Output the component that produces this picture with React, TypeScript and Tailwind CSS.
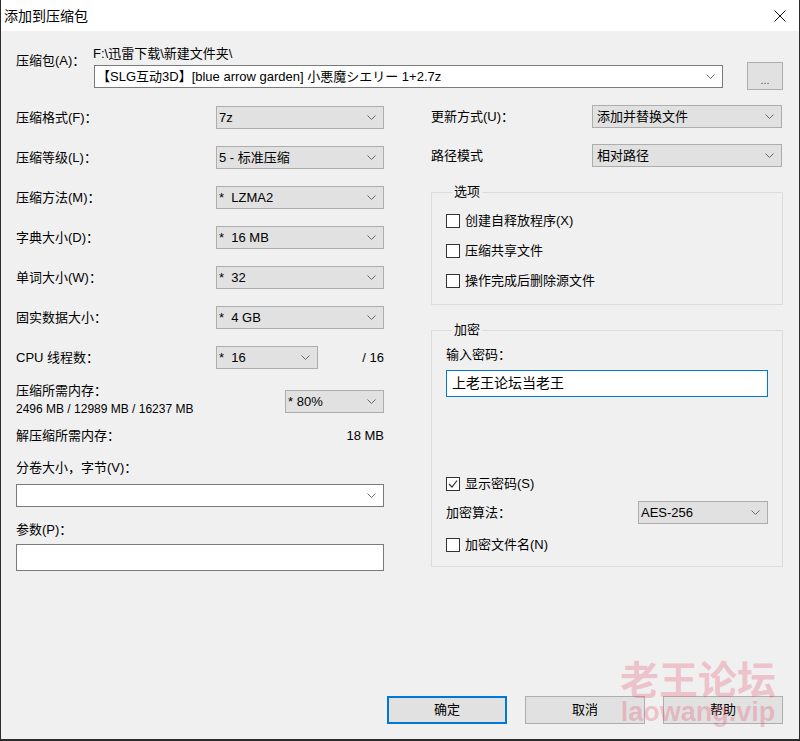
import React from 'react';
import clsx from 'clsx';

// small down-arrow used in every combo box
const Chevron = () => (
  <svg width="9" height="5" viewBox="0 0 9 5" className="shrink-0">
    <polyline points="0.5,0.5 4.5,4.5 8.5,0.5" fill="none" stroke="#6a6a6a" strokeWidth="1" />
  </svg>
);

type ComboProps = { text?: string; className?: string; white?: boolean };

const Combo: React.FC<ComboProps> = ({ text = '', className, white }) => (
  <div
    className={clsx(
      'flex items-center border pl-[2px] pr-[7px] leading-[18px] h-[23px]',
      white ? 'bg-white border-[#7a7a7a]' : 'bg-[#e1e1e1] border-[#adadad]',
      className,
    )}
  >
    <span className="flex-1 truncate whitespace-pre">{text}</span>
    <Chevron />
  </div>
);

const Check: React.FC<{ label: string; checked?: boolean }> = ({ label, checked }) => (
  <div className="flex items-center h-[18px]">
    <span className="w-[14px] h-[14px] border border-[#333333] bg-white flex items-center justify-center">
      {checked && (
        <svg width="10" height="10" viewBox="0 0 10 10">
          <polyline points="1,5 4,8 9,1.5" fill="none" stroke="#333333" strokeWidth="1.2" />
        </svg>
      )}
    </span>
    <span className="ml-[5px]">{label}</span>
  </div>
);

//left column rows with a label and a combo
const leftRows = [
  { label: '压缩格式(F)：', value: '7z' },
  { label: '压缩等级(L)：', value: '5 - 标准压缩' },
  { label: '压缩方法(M)：', value: '*  LZMA2' },
  { label: '字典大小(D)：', value: '*  16 MB' },
  { label: '单词大小(W)：', value: '*  32' },
  { label: '固实数据大小：', value: '*  4 GB' },
];

const Btn: React.FC<{ label: string; primary?: boolean }> = ({ label, primary }) => (
  <button
    className={clsx(
      'w-[120px] h-[28px] bg-[#e1e1e1] flex items-center justify-center',
      primary ? 'border-2 border-[#0078d7]' : 'border border-[#adadad]',
    )}
  >
    {label}
  </button>
);

export default function App() {
  return (
    <div className="w-[800px] h-[741px] flex flex-col bg-[#f0f0f0] border-l border-r border-b-2 border-[#2b2b2b] text-[13px] text-black font-[Liberation_Sans,Noto_Sans_CJK_SC,Noto_Sans_CJK_JP,sans-serif]">
      {/* title bar */}
      <div className="h-[31px] bg-white flex items-center justify-between pl-[3px] pr-[13px] shrink-0">
        <span className="text-[14px] leading-[20px]">添加到压缩包</span>
        <svg width="12" height="12" viewBox="0 0 12 12">
          <path d="M0.5 0.5 L11.5 11.5 M11.5 0.5 L0.5 11.5" stroke="#111" strokeWidth="1" />
        </svg>
      </div>

      <div className="relative flex-1 flex flex-col">
        {/* archive name */}
        <div className="flex mt-[13px] ml-[15px]">
          <div className="w-[78px] pt-[9px] leading-[16px]">压缩包(A)：</div>
          <div className="w-[629px]">
            <div className="h-[19px] leading-[19px] -ml-[1px]">F:\迅雷下载\新建文件夹\</div>
            <Combo white className="mt-[2px] pl-[2px]" text="【SLG互动3D】[blue arrow garden] 小悪魔シエリー 1+2.7z" />
          </div>
          <button className="ml-[24px] mt-[18px] w-[36px] h-[28px] bg-[#e1e1e1] border border-[#adadad] flex items-end justify-center pb-[3px] text-[11px] leading-[12px] text-[#555]">
            ...
          </button>
        </div>

        <div className="flex ml-[15px]">
          {/* left column */}
          <div className="w-[368px] flex flex-col">
            <div className="flex flex-col gap-[17px] mt-[16px]">
              {leftRows.map((r) => (
                <div key={r.label} className="flex items-center justify-between h-[23px]">
                  <span>{r.label}</span>
                  <Combo text={r.value} className="w-[168px]" />
                </div>
              ))}
              <div className="flex items-center h-[23px]">
                <span className="w-[200px]">CPU 线程数：</span>
                <Combo text="*  16" className="w-[102px]" />
                <span className="flex-1 text-right">/ 16</span>
              </div>
            </div>

            <div className="flex justify-between mt-[12px]">
              <div className="leading-[19px]">
                <div>压缩所需内存：</div>
                <div className="text-[12px]">2496 MB / 12989 MB / 16237 MB</div>
              </div>
              <Combo text="* 80%" className="w-[99px] mt-[9px]" />
            </div>

            <div className="flex justify-between mt-[8px] leading-[18px]">
              <span>解压缩所需内存：</span>
              <span>18 MB</span>
            </div>

            <div className="mt-[14px] leading-[18px]">分卷大小，字节(V)：</div>
            <Combo white className="mt-[7px] h-[22px]" />

            <div className="mt-[14px] leading-[18px]">参数(P)：</div>
            <div className="mt-[5px] h-[27px] bg-white border border-[#7a7a7a]" />
          </div>

          {/* right column */}
          <div className="w-[352px] ml-[47px] flex flex-col">
            <div className="flex items-center h-[23px] mt-[15px]">
              <span className="w-[161px]">更新方式(U)：</span>
              <Combo text="添加并替换文件" className="w-[190px] pl-[4px]" />
            </div>
            <div className="flex items-center h-[23px] mt-[16px]">
              <span className="w-[161px]">路径模式</span>
              <Combo text="相对路径" className="w-[190px] pl-[4px]" />
            </div>

            <fieldset className="mt-[16px] border border-[#dcdcdc] pl-[14px] pt-[11px] pb-[14px] flex flex-col gap-[12px]">
              <legend className="ml-[6px] px-[2px] leading-[18px]">选项</legend>
              <Check label="创建自释放程序(X)" />
              <Check label="压缩共享文件" />
              <Check label="操作完成后删除源文件" />
            </fieldset>

            <fieldset className="mt-[16px] border border-[#dcdcdc] pl-[14px] pt-[7px] pb-[12px]">
              <legend className="ml-[6px] px-[2px] leading-[18px]">加密</legend>
              <div className="leading-[18px]">输入密码：</div>
              <div className="mt-[6px] w-[322px] h-[27px] bg-white border border-[#0078d7] flex items-center pl-[5px] text-[14px]">
                上老王论坛当老王
              </div>
              <div className="mt-[78px]">
                <Check label="显示密码(S)" checked />
              </div>
              <div className="mt-[8px] w-[322px] h-[23px] flex items-center justify-between">
                <span>加密算法：</span>
                <Combo text="AES-256" className="w-[130px]" />
              </div>
              <div className="mt-[12px]">
                <Check label="加密文件名(N)" />
              </div>
            </fieldset>
          </div>
        </div>

        {/* buttons */}
        <div className="mt-auto flex justify-end gap-[18px] pr-[16px] pb-[15px]">
          <Btn label="确定" primary />
          <Btn label="取消" />
          <Btn label="帮助" />
        </div>

        {/* watermark */}
        <div className="absolute left-[619px] top-[626px] pointer-events-none flex flex-col items-center text-[rgba(232,80,110,0.3)] font-bold">
          <span className="text-[39px] leading-[40px] font-[Noto_Sans_CJK_SC,sans-serif]">老王论坛</span>
          <span className="text-[27px] leading-[30px] font-[Liberation_Sans,sans-serif]">laowang.vip</span>
        </div>
      </div>
    </div>
  );
}
